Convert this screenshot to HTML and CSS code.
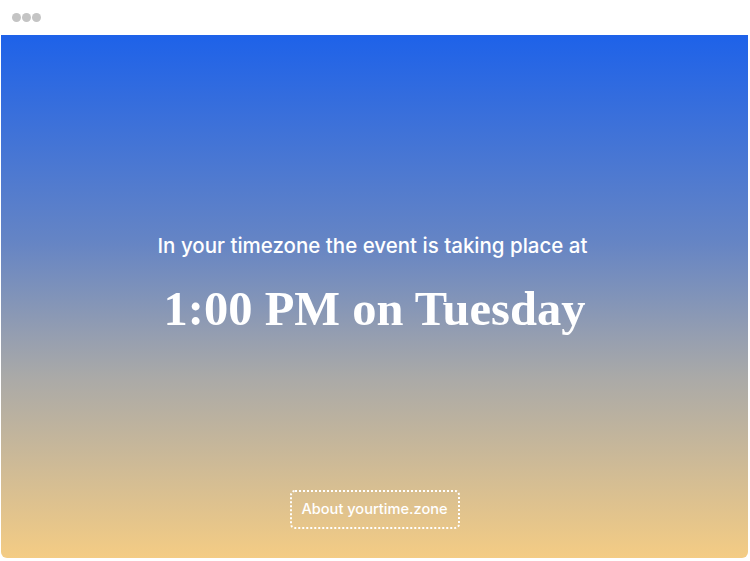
FILE: index.html
```html
<!DOCTYPE html>
<html>
<head>
<meta charset="utf-8">
<link rel="stylesheet" href="styles.css">
</head>
<body>
<div class="window">
  <div class="titlebar">
    <span class="dot"></span><span class="dot"></span><span class="dot"></span>
  </div>
  <main class="panel">
    <div class="center">
      <p class="lead">In your timezone the event is taking place at</p>
      <h1 class="time">1:00 PM on Tuesday</h1>
    </div>
    <a class="about" href="#">About yourtime.zone</a>
  </main>
</div>
</body>
</html>
```
FILE: styles.css
```css
html, body {
  margin: 0;
  padding: 0;
  background: #ffffff;
}
.window {
  width: 750px;
  height: 561px;
  display: flex;
  flex-direction: column;
}
.titlebar {
  height: 35px;
  display: flex;
  align-items: flex-start;
  gap: 1px;
  padding: 13px 0 0 12px;
  box-sizing: border-box;
}
.dot {
  width: 9px;
  height: 9px;
  border-radius: 50%;
  background: #c4c4c4;
}
.panel {
  margin: 0 2px 3px 1px;
  flex: 1;
  border-radius: 0 0 6px 6px;
  background: linear-gradient(to bottom, #1e62e9 0%, #6685c4 40%, #a9a9a8 65%, #f4cc84 100%);
  display: flex;
  flex-direction: column;
  align-items: center;
  color: #ffffff;
}
.center {
  flex: 1;
  display: flex;
  flex-direction: column;
  align-items: center;
  justify-content: flex-start;
  padding-top: 198px;
}
.lead {
  margin: 0 4px 0 0;
  font-family: "Inter", "Liberation Sans", sans-serif;
  font-weight: 500;
  font-size: 20.5px;
  line-height: 26px;
}
.time {
  margin: 22px 0 0 0;
  font-family: "Liberation Serif", serif;
  font-weight: bold;
  font-size: 48.5px;
  line-height: 56px;
}
.about {
  margin-bottom: 29px;
  width: 170px;
  height: 39px;
  box-sizing: border-box;
  border: 2px dotted #ffffff;
  border-radius: 5px;
  display: flex;
  align-items: center;
  justify-content: center;
  padding-bottom: 2px;
  color: #ffffff;
  text-decoration: none;
  font-family: "Inter", "Liberation Sans", sans-serif;
  font-weight: 500;
  font-size: 14.6px;
}
```
